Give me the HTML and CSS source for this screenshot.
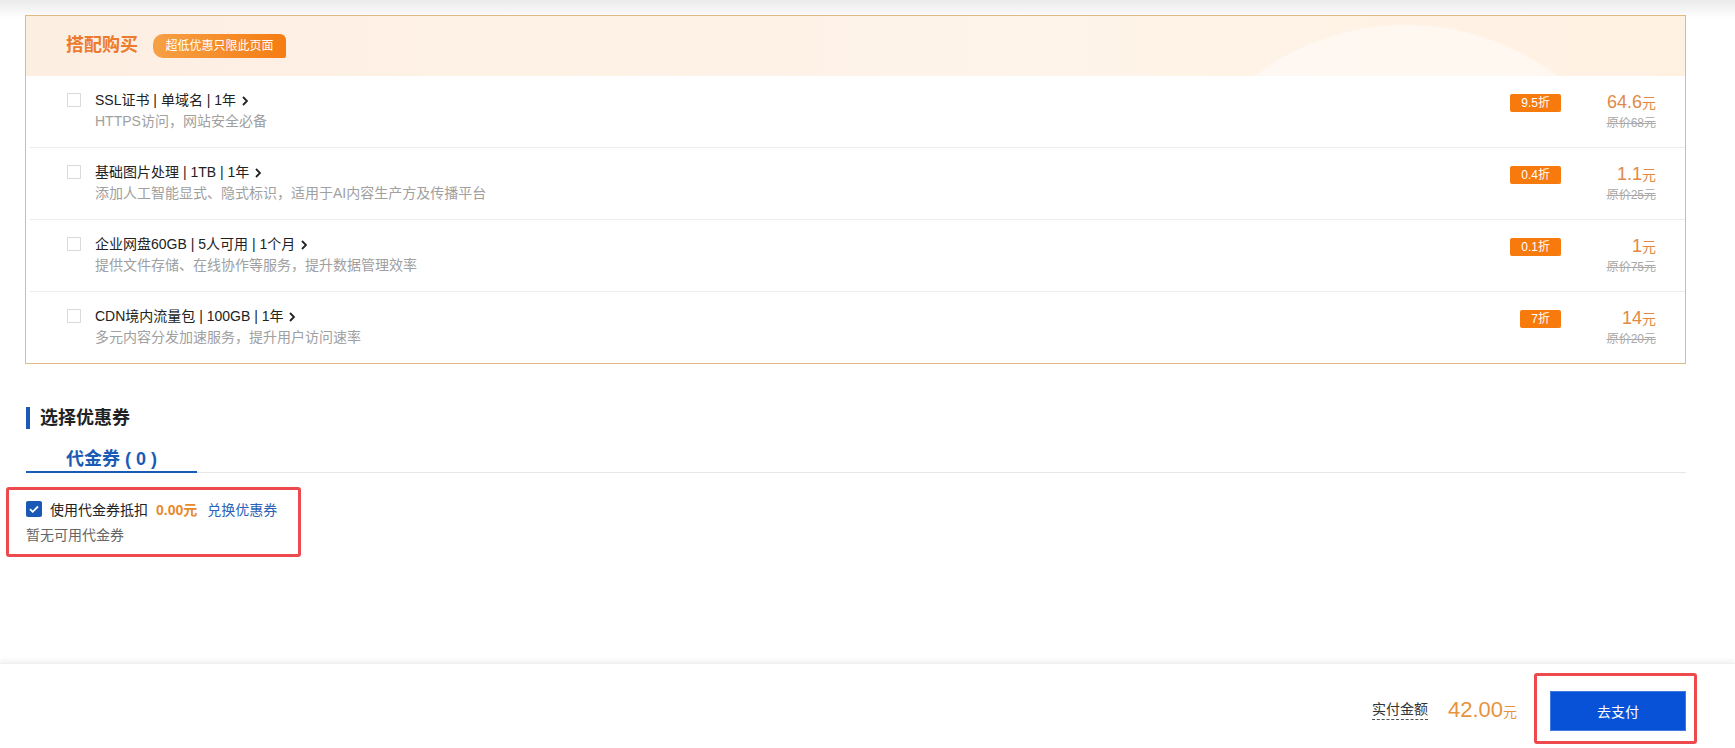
FILE: index.html
```html
<!DOCTYPE html>
<html lang="zh-CN">
<head>
<meta charset="utf-8">
<title>搭配购买</title>
<link rel="stylesheet" href="styles.css">
</head>
<body>
<div class="page">
  <main class="main">
    <section class="bundle">
      <div class="bundle-head">
        <h2 class="bundle-title">搭配购买</h2>
        <span class="bundle-tag">超低优惠只限此页面</span>
      </div>
      <ul class="items">
        <li class="item">
          <span class="box"></span>
          <div class="info">
            <div class="name">SSL证书 | 单域名 | 1年 <svg class="chev" viewBox="0 0 6 10" width="6" height="10"><path d="M1 1l4 4-4 4" fill="none" stroke="#222" stroke-width="1.8"/></svg></div>
            <div class="desc">HTTPS访问，网站安全必备</div>
          </div>
          <span class="off">9.5折</span>
          <div class="price"><div class="now"><b>64.6</b>元</div><div class="orig">原价68元</div></div>
        </li>
        <li class="item">
          <span class="box"></span>
          <div class="info">
            <div class="name">基础图片处理 | 1TB | 1年 <svg class="chev" viewBox="0 0 6 10" width="6" height="10"><path d="M1 1l4 4-4 4" fill="none" stroke="#222" stroke-width="1.8"/></svg></div>
            <div class="desc">添加人工智能显式、隐式标识，适用于AI内容生产方及传播平台</div>
          </div>
          <span class="off">0.4折</span>
          <div class="price"><div class="now"><b>1.1</b>元</div><div class="orig">原价25元</div></div>
        </li>
        <li class="item">
          <span class="box"></span>
          <div class="info">
            <div class="name">企业网盘60GB | 5人可用 | 1个月 <svg class="chev" viewBox="0 0 6 10" width="6" height="10"><path d="M1 1l4 4-4 4" fill="none" stroke="#222" stroke-width="1.8"/></svg></div>
            <div class="desc">提供文件存储、在线协作等服务，提升数据管理效率</div>
          </div>
          <span class="off">0.1折</span>
          <div class="price"><div class="now"><b>1</b>元</div><div class="orig">原价75元</div></div>
        </li>
        <li class="item">
          <span class="box"></span>
          <div class="info">
            <div class="name">CDN境内流量包 | 100GB | 1年 <svg class="chev" viewBox="0 0 6 10" width="6" height="10"><path d="M1 1l4 4-4 4" fill="none" stroke="#222" stroke-width="1.8"/></svg></div>
            <div class="desc">多元内容分发加速服务，提升用户访问速率</div>
          </div>
          <span class="off">7折</span>
          <div class="price"><div class="now"><b>14</b>元</div><div class="orig">原价20元</div></div>
        </li>
      </ul>
    </section>

    <section class="coupon">
      <h3 class="sec-title">选择优惠券</h3>
      <div class="tabs"><span class="tab">代金券 ( 0 )</span></div>
      <div class="mark">
        <div class="use">
          <span class="check"><svg viewBox="0 0 16 16" width="16" height="16"><path d="M4 8.2l2.7 2.6L12 5.5" fill="none" stroke="#fff" stroke-width="1.8"/></svg></span>
          <span class="use-label">使用代金券抵扣</span>
          <span class="use-amt">0.00元</span>
          <a class="use-link">兑换优惠券</a>
        </div>
        <div class="none">暂无可用代金券</div>
      </div>
    </section>
  </main>

  <footer class="bar">
    <span class="pay-label">实付金额</span>
    <span class="pay-amt"><b>42.00</b>元</span>
    <div class="mark-btn"><button class="pay-btn">去支付</button></div>
  </footer>
</div>
</body>
</html>
```

FILE: styles.css
```css
* { box-sizing: border-box; margin: 0; padding: 0; }
html, body { height: 100%; }
body {
  font-family: "Liberation Sans", "Noto Sans CJK SC", sans-serif;
  color: #333;
  background: #fff;
}
.page {
  height: 100vh;
  display: flex;
  flex-direction: column;
}
.main {
  flex: 1;
  padding: 15px 49px 0 25px;
  background: linear-gradient(#ebebeb 0, #f5f5f5 10px, #fff 18px);
}
.bundle {
  border: 1px solid #e2b985;
  background: #fff;
}
.bundle-head {
  height: 60px;
  display: flex;
  align-items: center;
  padding-left: 40px;
  gap: 15px;
  background:
    radial-gradient(circle at 1380px 260px, rgba(255,255,255,0.45) 0, rgba(255,255,255,0.45) 250px, transparent 252px),
    linear-gradient(90deg, #fdeee2 0%, #fff4ea 60%, #fff1e2 100%);
}
.bundle-title {
  font-size: 18px;
  font-weight: bold;
  color: #ec7b2e;
  line-height: 24px;
  margin-top: -2px;
}
.bundle-tag {
  height: 24px;
  width: 133px;
  line-height: 24px;
  text-align: center;
  font-size: 12px;
  color: #fff;
  background: linear-gradient(90deg, #f6a045, #f57c12);
  border-radius: 10px 6px 2px 10px;
}
.items { list-style: none; }
.item {
  height: 72px;
  margin-left: 4px;
  padding: 14px 0 0 37px;
  display: flex;
  align-items: flex-start;
  border-top: 1px solid #ececec;
}
.item:first-child { border-top: none; height: 71px; }
.box {
  width: 14px;
  height: 14px;
  border: 1px solid #dadada;
  background: #fff;
  margin-top: 3px;
  flex: none;
}
.info { flex: 1; margin-left: 14px; }
.name {
  font-size: 14px;
  line-height: 20px;
  color: #222;
}
.chev { vertical-align: -1px; margin-left: 2px; }
.desc {
  margin-top: 1px;
  font-size: 14px;
  line-height: 20px;
  color: #a0a0a0;
}
.off {
  flex: none;
  margin-top: 4px;
  height: 18px;
  line-height: 18px;
  padding: 0 11px;
  font-size: 12px;
  color: #fff;
  background: #f77a0c;
  border-radius: 2px;
  margin-right: 14px;
}
.price {
  flex: none;
  width: 81px;
  margin-right: 29px;
  text-align: right;
}
.now {
  font-size: 14px;
  line-height: 22px;
  color: #e28a45;
  margin-top: 1px;
}
.now b { font-weight: normal; font-size: 18px; }
.orig {
  font-size: 12px;
  line-height: 18px;
  color: #a8a8a8;
  text-decoration: line-through;
}
.coupon { padding-top: 43px; }
.sec-title {
  font-size: 18px;
  font-weight: bold;
  color: #222;
  line-height: 22px;
  margin-left: 1px;
  border-left: 4px solid #1a5bb5;
  padding-left: 10px;
}
.tabs {
  margin-top: 18px;
  border-bottom: 1px solid #e6e6e6;
  margin-left: 1px;
}
.tab {
  display: inline-block;
  width: 171px;
  text-align: center;
  font-size: 18px;
  font-weight: bold;
  color: #1a5bb5;
  line-height: 24px;
  border-bottom: 2px solid #1a5bb5;
  margin-bottom: -1px;
}
.mark {
  width: 295px;
  margin: 14px 0 0 -19px;
  border: 3px solid #ec4a4c;
  border-radius: 3px;
  padding: 9px 0 9px 17px;
}
.use {
  display: flex;
  align-items: center;
  height: 20px;
  font-size: 14px;
}
.check {
  width: 16px;
  height: 16px;
  background: #1a58b5;
  border-radius: 2px;
  display: flex;
}
.use-label { margin-left: 8px; color: #222; }
.use-amt { margin-left: 8px; color: #e8892b; font-weight: bold; font-size: 14px; }
.use-link { margin-left: 10px; color: #2a63b8; }
.none {
  margin-top: 6px;
  font-size: 14px;
  line-height: 20px;
  color: #666;
}
.bar {
  height: 85px;
  flex: none;
  display: flex;
  align-items: center;
  justify-content: flex-end;
  padding-right: 38px;
  box-shadow: 0 -3px 4px rgba(0,0,0,0.05);
  border-top: 1px solid #f0f0f0;
  background: #fff;
}
.pay-label {
  font-size: 14px;
  color: #333;
  line-height: 20px;
  border-bottom: 1px dashed #555;
  margin-top: 6px;
}
.pay-amt {
  margin-left: 20px;
  color: #e8923e;
  font-size: 14px;
  margin-top: 8px;
}
.pay-amt b { font-weight: normal; font-size: 22px; }
.mark-btn {
  margin-left: 17px;
  border: 3px solid #ec4a4c;
  border-radius: 3px;
  padding: 15px 8px 10px 13px;
  margin-top: 4px;
}
.pay-btn {
  display: block;
  width: 136px;
  height: 40px;
  background: #0752d6;
  border: 1px solid #3f7ae0;
  color: #fff;
  font-size: 14px;
  font-family: inherit;
}
```
